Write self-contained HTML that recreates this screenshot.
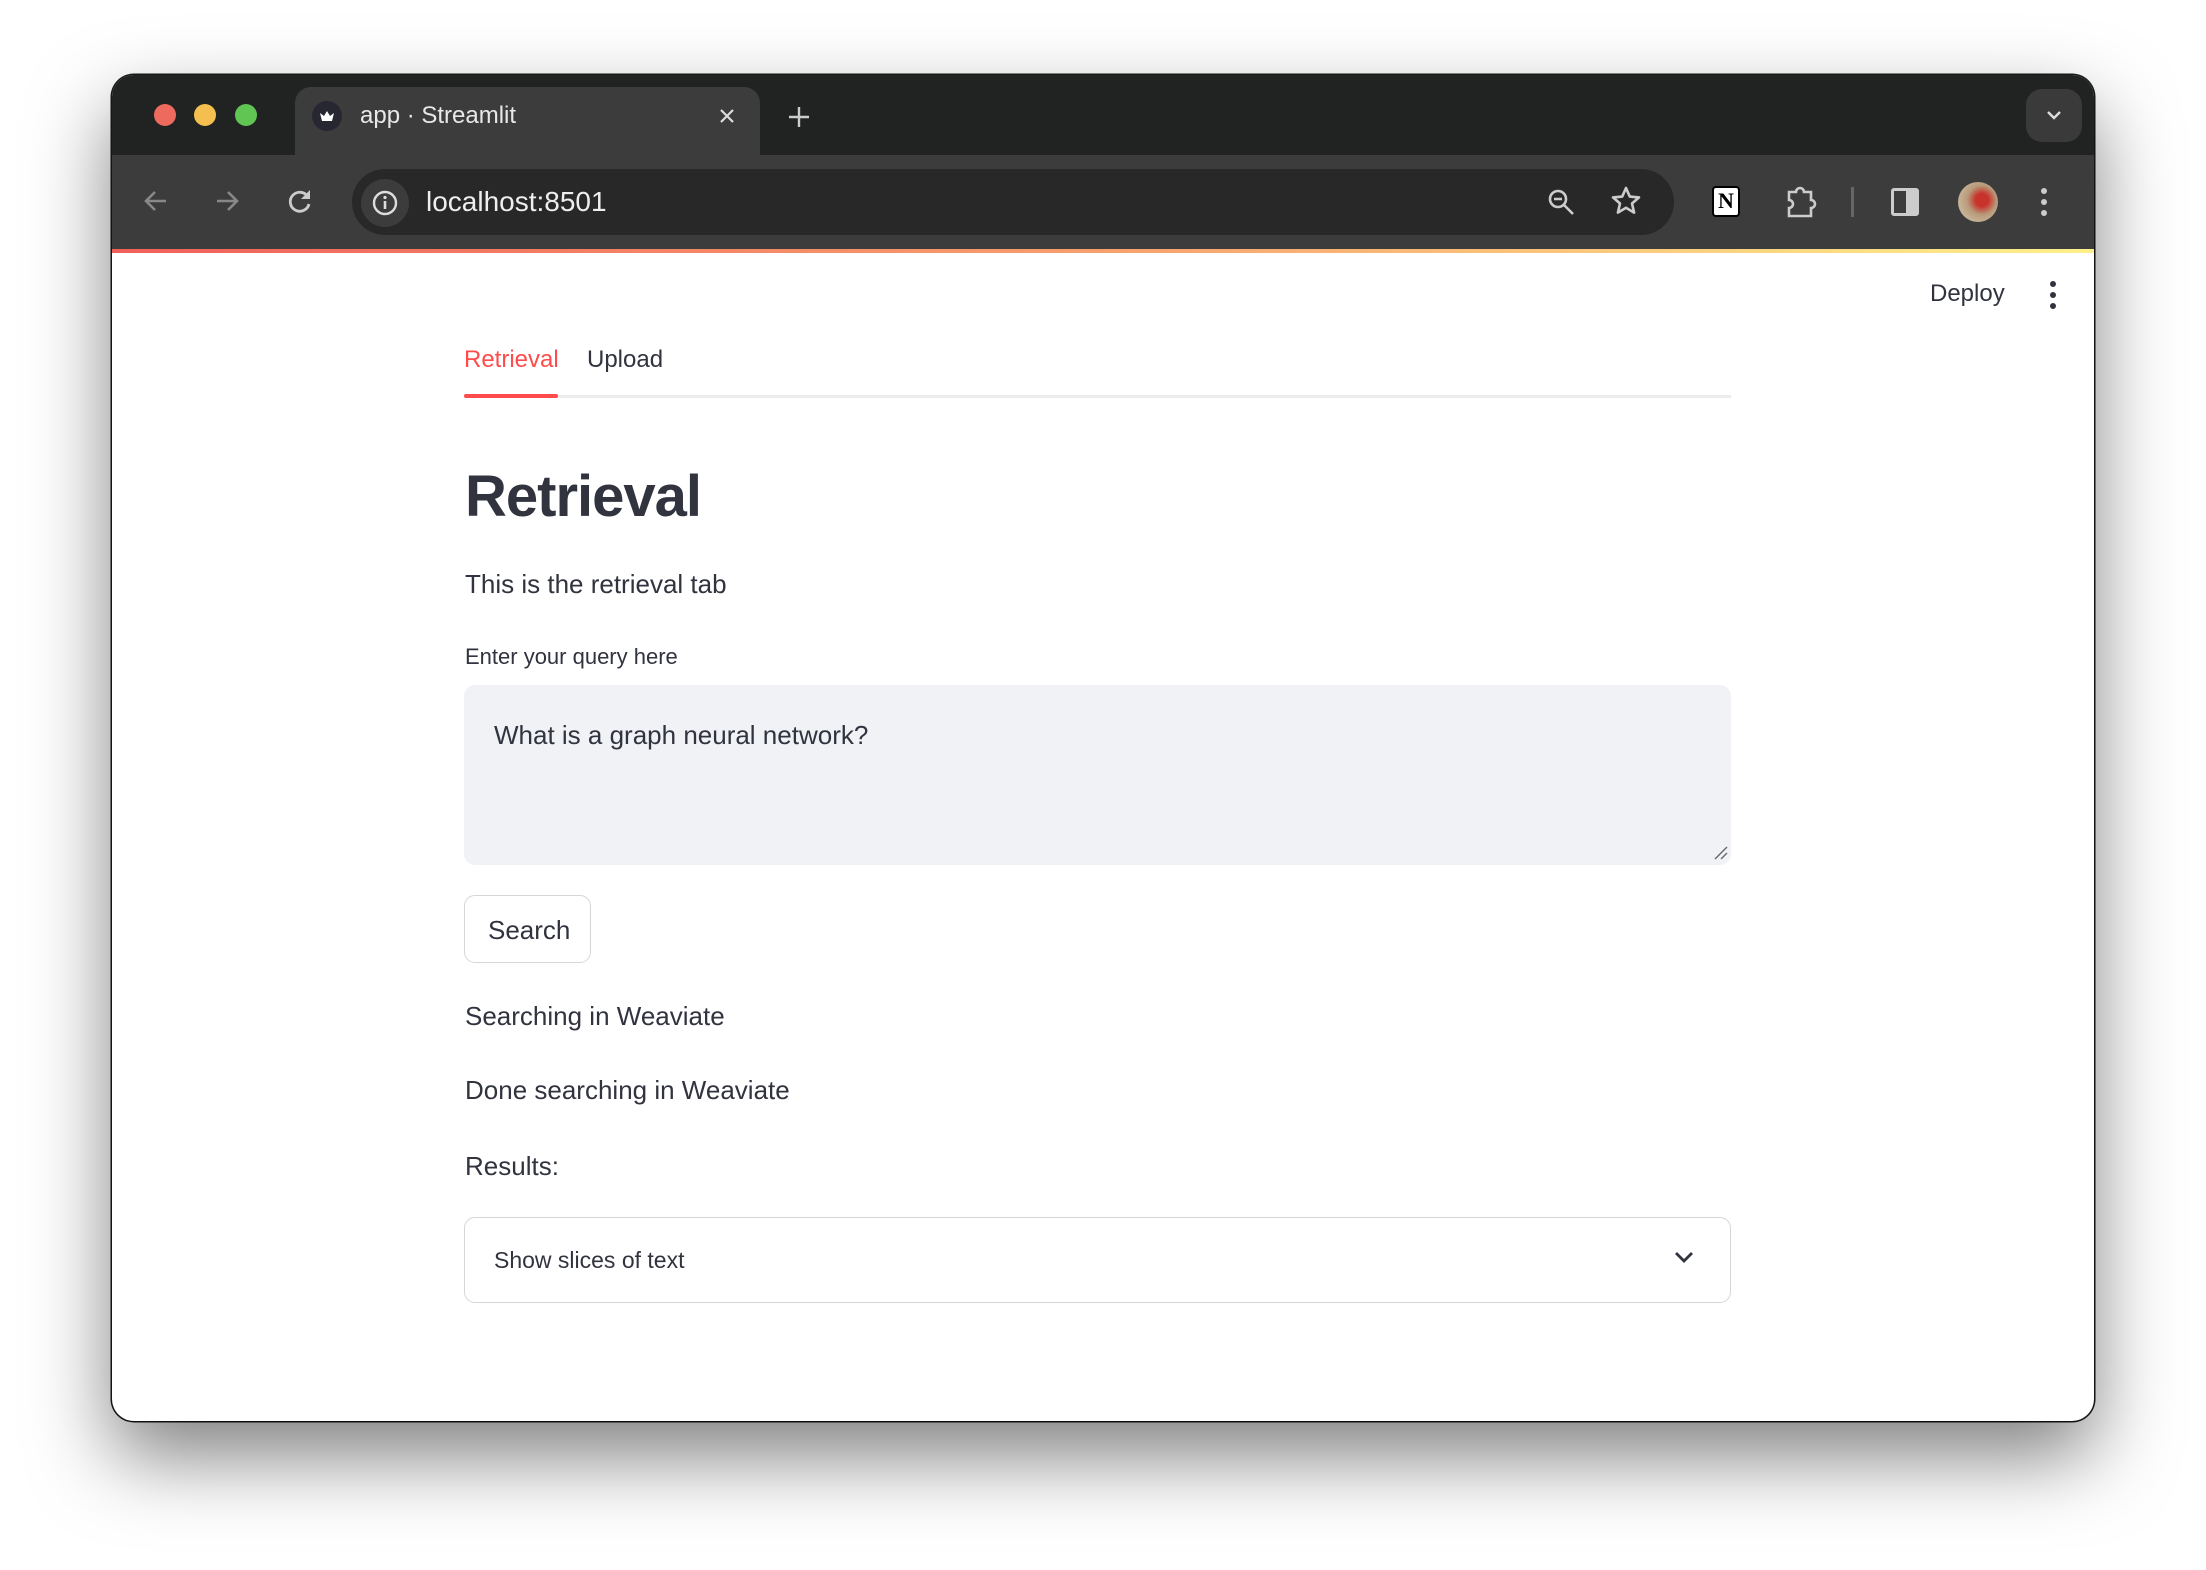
<!DOCTYPE html>
<html><head><meta charset="utf-8"><style>
*{margin:0;padding:0;box-sizing:border-box}
body{width:2206px;height:1570px;background:#fff;position:relative;overflow:hidden;font-family:"Liberation Sans",sans-serif;color:#31333f}
.a{position:absolute;line-height:1;white-space:nowrap}
#win{position:absolute;left:112px;top:75px;width:1982px;height:1346px;border-radius:22px;background:#fff;overflow:hidden;box-shadow:0 35px 80px rgba(0,0,0,.5),0 0 0 1.5px #1a1a1a}
</style></head><body>
<div id="win">
 <div style="position:absolute;left:0;top:0;width:1982px;height:80px;background:#212322"></div>
 <div style="position:absolute;left:0;top:80px;width:1982px;height:94px;background:#3c3c3c"></div>
 <div style="position:absolute;left:0;top:174px;width:1982px;height:4px;background:linear-gradient(90deg,#f0605a,#f7a06e 50%,#fdf08a)"></div>
 <div style="position:absolute;left:42px;top:29px;width:22px;height:22px;border-radius:50%;background:#ef6a5e"></div>
 <div style="position:absolute;left:82px;top:29px;width:22px;height:22px;border-radius:50%;background:#f5bf4f"></div>
 <div style="position:absolute;left:123px;top:29px;width:22px;height:22px;border-radius:50%;background:#61c554"></div>
 <div style="position:absolute;left:183px;top:12px;width:465px;height:70px;background:#3c3c3c;border-radius:16px 16px 0 0"></div>
 <div style="position:absolute;left:200px;top:26px;width:30px;height:30px;border-radius:50%;background:#262730"></div>
 <svg style="position:absolute;left:204px;top:30px" width="22" height="22" viewBox="0 0 22 22"><path d="M4 8l4 3 3-5 3 5 4-3-2 8H6z" fill="#fff"/></svg>
 <div class="a" style="left:248px;top:29px;font-size:24px;color:#e8e8e8">app · Streamlit</div>
 <svg style="position:absolute;left:606px;top:32px" width="18" height="18" viewBox="0 0 18 18"><path d="M3 3l12 12M15 3L3 15" stroke="#ddd" stroke-width="2.2"/></svg>
 <svg style="position:absolute;left:675px;top:30px" width="24" height="24" viewBox="0 0 24 24"><path d="M12 2v20M2 12h20" stroke="#ccc" stroke-width="2.4"/></svg>
 <div style="position:absolute;left:1914px;top:14px;width:56px;height:53px;border-radius:16px;background:#3a3a3a"></div>
 <svg style="position:absolute;left:1932px;top:31px" width="20" height="18" viewBox="0 0 20 18"><path d="M4 6l6 6 6-6" stroke="#ddd" stroke-width="2.4" fill="none"/></svg>
 <svg style="position:absolute;left:30px;top:112px" width="28" height="28" viewBox="0 0 28 28"><path d="M24 14H5M13 5l-9 9 9 9" stroke="#888" stroke-width="2.6" fill="none"/></svg>
 <svg style="position:absolute;left:101px;top:112px" width="28" height="28" viewBox="0 0 28 28"><path d="M4 14h19M15 5l9 9-9 9" stroke="#888" stroke-width="2.6" fill="none"/></svg>
 <svg style="position:absolute;left:174px;top:112px" width="28" height="28" viewBox="0 0 28 28"><path d="M22 10A9.5 9.5 0 1 0 23 17" stroke="#ccc" stroke-width="2.8" fill="none"/><path d="M24 3v9h-9z" fill="#ccc"/></svg>
 <div style="position:absolute;left:240px;top:94px;width:1322px;height:66px;border-radius:33px;background:#282828"></div>
 <div style="position:absolute;left:249px;top:104px;width:48px;height:48px;border-radius:50%;background:#3c3c3c"></div>
 <svg style="position:absolute;left:259px;top:114px" width="28" height="28" viewBox="0 0 28 28"><circle cx="14" cy="14" r="11" stroke="#ddd" stroke-width="2.4" fill="none"/><path d="M14 12v8" stroke="#ddd" stroke-width="2.6"/><circle cx="14" cy="8.5" r="1.6" fill="#ddd"/></svg>
 <div class="a" style="left:314px;top:113px;font-size:28px;color:#eee">localhost:8501</div>
 <svg style="position:absolute;left:1434px;top:112px" width="30" height="30" viewBox="0 0 30 30"><circle cx="12" cy="12" r="8" stroke="#ccc" stroke-width="2.6" fill="none"/><path d="M8 12h8M18 18l9 9" stroke="#ccc" stroke-width="2.6"/></svg>
 <svg style="position:absolute;left:1498px;top:110px" width="32" height="32" viewBox="0 0 32 32"><path d="M16 3l3.8 8.6 9.2.8-7 6.1 2.1 9.1L16 22.8l-8.1 4.8 2.1-9.1-7-6.1 9.2-.8z" stroke="#ccc" stroke-width="2.6" fill="none" stroke-linejoin="round"/></svg>
 <div style="position:absolute;left:1600px;top:111px;width:28px;height:31px;background:#fff;border:2.5px solid #000;border-radius:4px;font:bold 22px 'Liberation Serif',serif;color:#000;text-align:center;line-height:26px">N</div>
 <svg style="position:absolute;left:1672px;top:110px" width="34" height="34" viewBox="0 0 34 34"><path d="M5 7h7a4 4 0 0 1 8 0h7v8a4 4 0 0 1 0 8v8H5v-8a4 4 0 0 0 0-8z" stroke="#ccc" stroke-width="2.6" fill="none"/></svg>
 <div style="position:absolute;left:1739px;top:112px;width:3px;height:30px;background:#666"></div>
 <div style="position:absolute;left:1779px;top:113px;width:28px;height:28px;border:3px solid #ccc;border-radius:3px"><div style="position:absolute;right:0;top:0;width:10px;height:22px;background:#ccc"></div></div>
 <div style="position:absolute;left:1846px;top:107px;width:40px;height:40px;border-radius:50%;background:radial-gradient(circle at 60% 45%,#c8342c 20%,#b89a7a 45%,#c9b79b 75%)"></div>
 <svg style="position:absolute;left:1926px;top:110px" width="12" height="34" viewBox="0 0 12 34"><circle cx="6" cy="6" r="3" fill="#ccc"/><circle cx="6" cy="17" r="3" fill="#ccc"/><circle cx="6" cy="28" r="3" fill="#ccc"/></svg>
 <div class="a" style="left:1818px;top:207px;font-size:24px">Deploy</div>
 <svg style="position:absolute;left:1935px;top:205px" width="12" height="30" viewBox="0 0 12 30"><circle cx="6" cy="4" r="3" fill="#31333f"/><circle cx="6" cy="15" r="3" fill="#31333f"/><circle cx="6" cy="26" r="3" fill="#31333f"/></svg>
 <div class="a" style="left:352px;top:273px;font-size:24px;color:#ff4b4b">Retrieval</div>
 <div class="a" style="left:475px;top:273px;font-size:24px">Upload</div>
 <div style="position:absolute;left:352px;top:320px;width:1267px;height:3px;background:#ececec"></div>
 <div style="position:absolute;left:352px;top:319px;width:94px;height:4px;background:#ff4b4b;border-radius:2px"></div>
 <div class="a" style="left:353px;top:393px;font-size:58px;font-weight:bold;letter-spacing:-1px">Retrieval</div>
 <div class="a" style="left:353px;top:496px;font-size:26px">This is the retrieval tab</div>
 <div class="a" style="left:353px;top:571px;font-size:22px">Enter your query here</div>
 <div style="position:absolute;left:352px;top:610px;width:1267px;height:180px;border-radius:11px;background:#f0f2f6"></div>
 <div class="a" style="left:382px;top:647px;font-size:26px">What is a graph neural network?</div>
 <svg style="position:absolute;left:1601px;top:770px" width="16" height="16" viewBox="0 0 16 16"><path d="M2 14L14 2M8 14l6-6" stroke="#666" stroke-width="1.4"/></svg>
 <div style="position:absolute;left:352px;top:820px;width:127px;height:68px;border:1.5px solid #d6d6d9;border-radius:11px"></div>
 <div class="a" style="left:376px;top:842px;font-size:26px">Search</div>
 <div class="a" style="left:353px;top:928px;font-size:26px">Searching in Weaviate</div>
 <div class="a" style="left:353px;top:1002px;font-size:26px">Done searching in Weaviate</div>
 <div class="a" style="left:353px;top:1078px;font-size:26px">Results:</div>
 <div style="position:absolute;left:352px;top:1142px;width:1267px;height:86px;border:1.5px solid #d6d6d9;border-radius:11px"></div>
 <div class="a" style="left:382px;top:1174px;font-size:23px">Show slices of text</div>
 <svg style="position:absolute;left:1562px;top:1175px" width="20" height="14" viewBox="0 0 20 14"><path d="M2 3l8 8 8-8" stroke="#31333f" stroke-width="2.8" fill="none"/></svg>
</div>
</body></html>
